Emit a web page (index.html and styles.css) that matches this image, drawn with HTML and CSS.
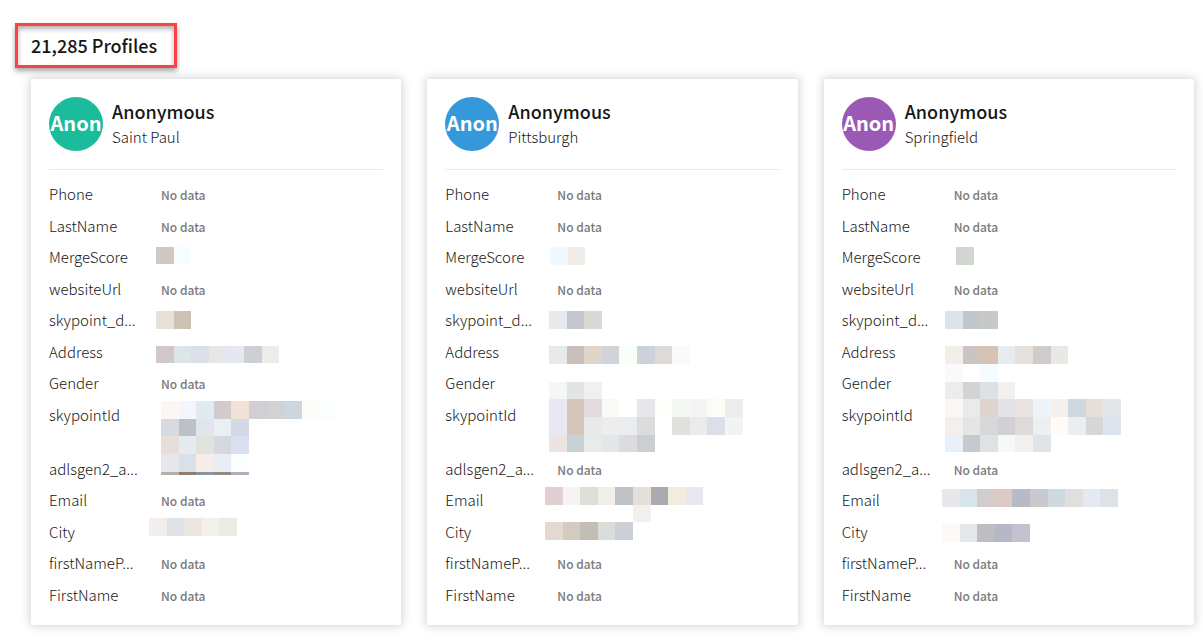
FILE: index.html
```html
<!DOCTYPE html>
<html lang="en">
<head>
<meta charset="utf-8">
<meta name="viewport" content="width=device-width, initial-scale=1">
<title>Profiles</title>
<link rel="stylesheet" href="styles.css">
</head>
<body>
<main class="page">
  <h1 class="count">21,285 Profiles</h1>
  <section class="cards">
    <article class="card">
      <header class="card-head">
        <div class="avatar avatar-green">Anon</div>
        <div><h2 class="name">Anonymous</h2><p class="city">Saint Paul</p></div>
      </header>
      <dl class="fields">
        <div class="row"><dt>Phone</dt><dd>No data</dd></div>
        <div class="row"><dt>LastName</dt><dd>No data</dd></div>
        <div class="row"><dt>MergeScore</dt><dd></dd></div>
        <div class="row"><dt>websiteUrl</dt><dd>No data</dd></div>
        <div class="row"><dt>skypoint_d...</dt><dd></dd></div>
        <div class="row"><dt>Address</dt><dd></dd></div>
        <div class="row"><dt>Gender</dt><dd>No data</dd></div>
        <div class="row row-double"><dt>skypointId</dt><dd></dd></div>
        <div class="row"><dt>adlsgen2_a...</dt><dd></dd></div>
        <div class="row"><dt>Email</dt><dd>No data</dd></div>
        <div class="row"><dt>City</dt><dd></dd></div>
        <div class="row"><dt>firstNameP...</dt><dd>No data</dd></div>
        <div class="row"><dt>FirstName</dt><dd>No data</dd></div>
      </dl>
      <svg class="mosaic" aria-hidden="true"></svg>
    </article>
    <article class="card">
      <header class="card-head">
        <div class="avatar avatar-blue">Anon</div>
        <div><h2 class="name">Anonymous</h2><p class="city">Pittsburgh</p></div>
      </header>
      <dl class="fields">
        <div class="row"><dt>Phone</dt><dd>No data</dd></div>
        <div class="row"><dt>LastName</dt><dd>No data</dd></div>
        <div class="row"><dt>MergeScore</dt><dd></dd></div>
        <div class="row"><dt>websiteUrl</dt><dd>No data</dd></div>
        <div class="row"><dt>skypoint_d...</dt><dd></dd></div>
        <div class="row"><dt>Address</dt><dd></dd></div>
        <div class="row"><dt>Gender</dt><dd></dd></div>
        <div class="row row-double"><dt>skypointId</dt><dd></dd></div>
        <div class="row"><dt>adlsgen2_a...</dt><dd>No data</dd></div>
        <div class="row"><dt>Email</dt><dd></dd></div>
        <div class="row"><dt>City</dt><dd></dd></div>
        <div class="row"><dt>firstNameP...</dt><dd>No data</dd></div>
        <div class="row"><dt>FirstName</dt><dd>No data</dd></div>
      </dl>
      <svg class="mosaic" aria-hidden="true"></svg>
    </article>
    <article class="card">
      <header class="card-head">
        <div class="avatar avatar-purple">Anon</div>
        <div><h2 class="name">Anonymous</h2><p class="city">Springfield</p></div>
      </header>
      <dl class="fields">
        <div class="row"><dt>Phone</dt><dd>No data</dd></div>
        <div class="row"><dt>LastName</dt><dd>No data</dd></div>
        <div class="row"><dt>MergeScore</dt><dd></dd></div>
        <div class="row"><dt>websiteUrl</dt><dd>No data</dd></div>
        <div class="row"><dt>skypoint_d...</dt><dd></dd></div>
        <div class="row"><dt>Address</dt><dd></dd></div>
        <div class="row"><dt>Gender</dt><dd></dd></div>
        <div class="row row-double"><dt>skypointId</dt><dd></dd></div>
        <div class="row"><dt>adlsgen2_a...</dt><dd>No data</dd></div>
        <div class="row"><dt>Email</dt><dd></dd></div>
        <div class="row"><dt>City</dt><dd></dd></div>
        <div class="row"><dt>firstNameP...</dt><dd>No data</dd></div>
        <div class="row"><dt>FirstName</dt><dd>No data</dd></div>
      </dl>
      <svg class="mosaic" aria-hidden="true"></svg>
    </article>
  </section>
</main>
<script src="mosaic.js"></script>
</body>
</html>
```
FILE: styles.css
```css
* {
  box-sizing: border-box;
}

body {
  margin: 0;
  background: #fff;
  color: #161616;
  font-family: "Noto Sans CJK JP", "Noto Sans CJK SC", "Open Sans", sans-serif;
  font-size: 15px;
  line-height: 1.5;
}

.page {
  padding: 23px 9px 16px 15px;
}

.count {
  width: fit-content;
  margin: 0;
  padding: 6px 17px 6px 13px;
  border: 3px solid #fb4346;
  box-shadow: 0 3px 5px rgba(0, 0, 0, 0.35), inset 0 3px 5px rgba(0, 0, 0, 0.3);
  font-size: 18px;
  font-weight: 500;
}

.cards {
  display: grid;
  grid-template-columns: repeat(3, minmax(0, 1fr));
  gap: 26px;
  margin: 11px 0 0 16px;
}

.card {
  position: relative;
  padding: 18px 18px 19px;
  border-radius: 2px;
  background: #fff;
  box-shadow: 0 0 8px 2px rgba(0, 0, 0, 0.15);
}

.card-head {
  display: flex;
  gap: 9px;
  padding-bottom: 18px;
  border-bottom: 1px solid #ebebeb;
}

.avatar {
  display: flex;
  align-items: center;
  justify-content: center;
  width: 54px;
  height: 54px;
  padding-bottom: 2px;
  border-radius: 50%;
  color: #fff;
  font-size: 20px;
  font-weight: 700;
  line-height: 28px;
}

.avatar-green { background: #1abc9c; }
.avatar-blue { background: #3498db; }
.avatar-purple { background: #9b59b6; }

.name {
  margin: 0 0 1px;
  font-size: 18px;
  font-weight: 500;
  line-height: 28px;
}

.city {
  margin: 0;
}

.fields {
  display: flex;
  flex-direction: column;
  gap: 9px;
  margin: 13px 0 0;
}

.row {
  display: grid;
  grid-template-columns: 90px minmax(0, 1fr);
  column-gap: 22px;
  height: 1.5em;
}

.row-double {
  height: 3em;
}

.row dt,
.city {
  font-weight: 300;
}

.row dt {
  white-space: nowrap;
}

.row dd {
  margin: 0;
  color: #7a7a7a;
  font-size: 12px;
  font-weight: 500;
  line-height: 24px;
}

.mosaic {
  position: absolute;
  inset: 0;
  width: 100%;
  height: 100%;
  pointer-events: none;
}
```
FILE: mosaic.js
```js
// Pixelated masks over private values, one list per card.
// Each strip: left, top, height, cell colours ("-" leaves a cell clear).
const masks = [
  [
    [125, 168, 17, "d3c7c6 f7fcff"],
    [125, 232, 18, "e6e2d7 ccc3b4"],
    [125, 267, 17, "d3c8c9 dce5e7 dadfe8 e8e7e5 e4e8f1 ccd0d3 edece8"],
    [130, 322, 18, "fbf7f2 f3f7fb e0eaf2 d1cccb f1e2d5 d2cfd3 cfd3d6 ccd6df fdfcf6 f9feff"],
    [130, 340, 17, "d7dbdf bcc1c8 e1e6ee eaeff4 d3dae5"],
    [130, 357, 18, "e7ded9 e4eaee e0e2dd d5d8dd dae0f0"],
    [130, 375, 18, "e5e7ed d8e0e8 f6ede8 e8edf6 fbffff"],
    [130, 393, 3, "b0afa9 8e7d70 8995a3 948b80 afafba"],
    [118, 439, 18, "f3eeec e1e2e5 ebe6e0 f3f0eb eaebe4"]
  ],
  [
    [123, 168, 18, "f0f9ff f0ece7"],
    [122, 232, 18, "e6eaec c4c7cf dad9d5"],
    [122, 267, 18, "e8e9ea c9beb9 e0d5c9 d2d3d8 f8fff6 cdd1da dedad7 fafafb"],
    [122, 303, 17, "f4f7f6 e2e4e6 f2f0ef"],
    [122, 320, 18, "e8e8f3 d4c6b9 e1dbdd f9faf5 - e7e7e9 fefefb f3f8f5 f4f4f5 fcfbf6 eceeed"],
    [122, 338, 18, "e8e8f3 d4c6b9 e9e9e9 ededee e9edef dcdcdd - e0e0de ebebec dadfe8 f2f4f4"],
    [122, 356, 17, "ede4e2 c7cfd7 e8ebea e1e7eb dcdcde cbced3"],
    [118, 408, 18, "e1cfd1 f5f4f3 deded9 f1eee8 bfc2c2 e5dfd9 aaabad f2ecdc e9e8ee"],
    [118, 426, 17, "- - - - - f2f0ef"],
    [118, 443, 18, "e5d8d0 d2cbc0 c3beb3 d9dedb cbd0d6"]
  ],
  [
    [132, 168, 18, "d1d6d0"],
    [121, 232, 18, "dbe3eb c0c7c9 c7c8ca"],
    [121, 267, 18, "f2efe8 cac5c3 d5c4b5 e7ecef e5e0da d0cccb e9e8e4"],
    [121, 285, 18, "fafafa - f5fcff"],
    [121, 303, 17, "ececec d1d4d0 dce2e4 f2f1ef"],
    [121, 320, 18, "fbf7f2 e9eaea dfd4ce e4e3e7 e9e4e0 eff3fa f5f0ec ced8e1 e6dedb e3e7ea"],
    [121, 338, 18, "f3efed e4e6e5 d7d8da d2d0d4 dedad9 eef0f0 fffbf6 ebedef d7d7d7 dce4ed"],
    [121, 356, 17, "e8f1fa c4cace dde2e4 f6f9f8 f1f0ec dfe4e8"],
    [118, 410, 18, "e8e8ec d8e6e9 d2cdcb ddcac5 b6bbc7 cac9cd cfdae0 e0dfdd e4e9f3 dce2e5"],
    [118, 445, 18, "fdf9f7 e4e8ed bfbcc3 b6b9c5 c3c0d0"]
  ]
];

const cellWidth = 17.6;

document.querySelectorAll(".mosaic").forEach((svg, card) => {
  for (const [left, top, height, colours] of masks[card]) {
    colours.split(" ").forEach((colour, i) => {
      if (colour === "-") return;
      const start = Math.round(i * cellWidth);
      const end = Math.round((i + 1) * cellWidth);
      const rect = document.createElementNS("http://www.w3.org/2000/svg", "rect");
      rect.setAttribute("x", left + start);
      rect.setAttribute("y", top);
      rect.setAttribute("width", end - start);
      rect.setAttribute("height", height);
      rect.setAttribute("fill", "#" + colour);
      rect.setAttribute("shape-rendering", "crispEdges");
      svg.append(rect);
    });
  }
});
```
